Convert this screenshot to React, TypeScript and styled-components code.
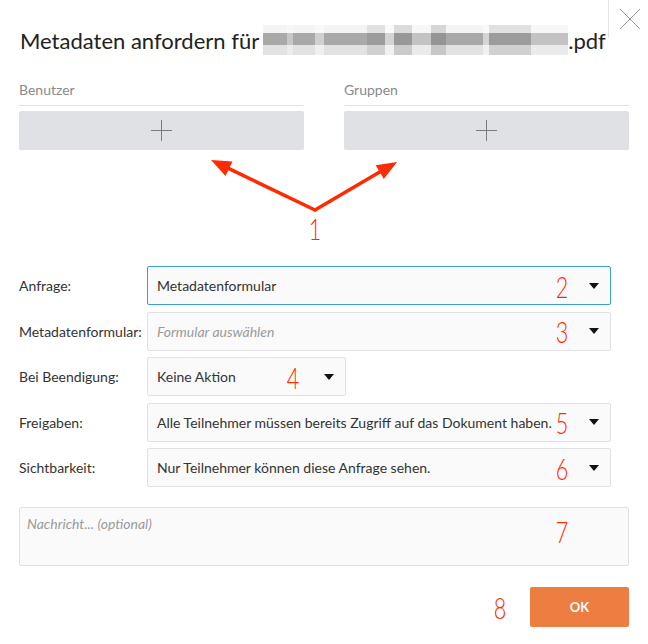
import React from "react";
import styled, { createGlobalStyle } from "styled-components";

const Global = createGlobalStyle`
  html, body { margin: 0; padding: 0; background: #fff; }
  body { font-family: Lato, "Open Sans", sans-serif; color: #333; }
  * { box-sizing: border-box; }
`;

const Dialog = styled.div`
  position: relative;
  width: 648px;
  height: 644px;
  padding: 25px 19px 0 19px;
  background: #fff;
  overflow: hidden;
`;

const CloseBox = styled.div`
  position: absolute;
  top: 0;
  left: 608px;
  width: 40px;
  height: 38px;
  border-left: 1px solid #e3e3e3;
  display: flex;
  align-items: center;
  justify-content: center;
  padding-left: 2px;
`;

const Title = styled.h1`
  margin: 0;
  padding-left: 1px;
  font-size: 22px;
  line-height: 29px;
  font-weight: 400;
  color: #222;
  white-space: nowrap;
  display: flex;
  align-items: center;
`;

const Blurred = styled.span`
  display: inline-block;
  width: 305px;
  height: 30px;
  margin: 0 0 0 4px;
  background:
    linear-gradient(to right,
      rgba(255,255,255,0) 0 8%, rgba(255,255,255,0.35) 8% 10%,
      rgba(255,255,255,0) 10% 17%, rgba(255,255,255,0.45) 17% 20%,
      rgba(255,255,255,0) 20% 34%, rgba(0,0,0,0.08) 34% 40%,
      rgba(255,255,255,0.5) 40% 43%, rgba(0,0,0,0.1) 43% 49%,
      rgba(255,255,255,0.3) 49% 55%, rgba(0,0,0,0.12) 55% 60%,
      rgba(255,255,255,0) 60% 72%, rgba(255,255,255,0.5) 72% 74%,
      rgba(0,0,0,0.08) 74% 88%, rgba(255,255,255,0.3) 88% 100%),
    linear-gradient(to bottom,
      #f4f4f4 0 27%, #a9a9a9 27% 67%, #e2e2e2 67% 100%);
`;

const Columns = styled.div`
  margin-top: 26px;
  display: grid;
  grid-template-columns: 285px 285px;
  column-gap: 40px;
`;

const ColumnLabel = styled.div`
  font-size: 14px;
  line-height: 17px;
  color: #8a8a8a;
  padding: 0 0 7px 0;
  border-bottom: 1px solid #e3e3e3;
`;

const AddBox = styled.div`
  margin-top: 5px;
  height: 39px;
  background: #dfe1e4;
  border-radius: 2px;
  display: flex;
  align-items: center;
  justify-content: center;
`;

const Form = styled.div`
  margin-top: 116px;
  display: grid;
  grid-template-columns: 128px 464px;
  row-gap: 6.5px;
  align-items: center;
`;

const Label = styled.div`
  font-size: 14px;
  color: #333;
`;

const Field = styled.div<{ $focus?: boolean; $w?: number }>`
  position: relative;
  height: 39px;
  width: ${(p) => (p.$w ? `${p.$w}px` : "100%")};
  background: #fafafa;
  border: 1px solid ${(p) => (p.$focus ? "#3a9ed8" : "#e1e1e1")};
  border-radius: 2px;
  display: flex;
  align-items: center;
  padding: 0 30px 0 9px;
  font-size: 14px;
  color: #333;
`;

const Placeholder = styled.span`
  font-style: italic;
  color: #9a9a9a;
`;

const Caret = styled.span`
  position: absolute;
  right: 11px;
  top: 50%;
  margin-top: -3px;
  width: 0;
  height: 0;
  border-left: 5px solid transparent;
  border-right: 5px solid transparent;
  border-top: 6px solid #111;
`;

const Marker = styled.span<{ $right?: number; $top?: number }>`
  position: absolute;
  right: ${(p) => p.$right ?? 42}px;
  top: ${(p) => (p.$top !== undefined ? `${p.$top}px` : "50%")};
  transform: ${(p) => (p.$top !== undefined ? "" : "translateY(-50%)")} scaleX(0.72);
  transform-origin: right center;
  font-family: Lato, sans-serif;
  font-weight: 300;
  font-style: normal;
  font-size: 30px;
  line-height: 30px;
  color: #ff2a00;
`;

const MessageBox = styled.div`
  position: relative;
  margin-top: 20px;
  height: 59px;
  background: #fafafa;
  border: 1px solid #e1e1e1;
  border-radius: 2px;
  padding: 7px 7px;
  font-size: 14px;
  font-style: italic;
  color: #9a9a9a;
`;

const Footer = styled.div`
  position: relative;
  margin-top: 21px;
  display: flex;
  justify-content: flex-end;
`;

const OkButton = styled.button`
  width: 99px;
  height: 40px;
  border: none;
  border-radius: 2px;
  background: #ed7d40;
  color: #fff;
  font-family: Lato, sans-serif;
  font-weight: 700;
  font-size: 13px;
`;

const Arrows = styled.svg`
  position: absolute;
  left: 0;
  top: 0;
  pointer-events: none;
`;

const One = styled.span`
  position: absolute;
  left: 315px;
  top: 213px;
  transform: translateX(-50%) scaleX(0.72);
  font-weight: 300;
  font-size: 30px;
  line-height: 30px;
  color: #ff2a00;
`;

const Plus = () => (
  <svg width="21" height="21" viewBox="0 0 21 21">
    <path d="M10.5 0V21M0 10.5H21" stroke="#7b7b7b" strokeWidth="1" />
  </svg>
);

export default function App() {
  return (
    <>
      <Global />
      <Dialog>
        <CloseBox>
          <svg width="22" height="22" viewBox="0 0 22 22">
            <path d="M1 1L21 21M21 1L1 21" stroke="#9a9a9a" strokeWidth="1" />
          </svg>
        </CloseBox>
        <Title>
          Metadaten anfordern für<Blurred />.pdf
        </Title>
        <Columns>
          <div>
            <ColumnLabel>Benutzer</ColumnLabel>
            <AddBox>
              <Plus />
            </AddBox>
          </div>
          <div>
            <ColumnLabel>Gruppen</ColumnLabel>
            <AddBox>
              <Plus />
            </AddBox>
          </div>
        </Columns>

        <Arrows width="648" height="260">
          <g stroke="#ff2a00" strokeWidth="3.5" strokeLinecap="round" fill="none">
            <path d="M315 210L229 168.7M315 210L379.7 172.1" />
          </g>
          <g fill="#ff2a00">
            <polygon points="211,160 232.5,161.5 225.5,175.9" />
            <polygon points="397,162 383.8,179 375.7,165.2" />
          </g>
        </Arrows>
        <One>1</One>

        <Form>
          <Label>Anfrage:</Label>
          <Field $focus>
            Metadatenformular
            <Marker>2</Marker>
            <Caret />
          </Field>
          <Label>Metadatenformular:</Label>
          <Field>
            <Placeholder>Formular auswählen</Placeholder>
            <Marker>3</Marker>
            <Caret />
          </Field>
          <Label>Bei Beendigung:</Label>
          <Field $w={199}>
            Keine Aktion
            <Marker $right={46}>4</Marker>
            <Caret />
          </Field>
          <Label>Freigaben:</Label>
          <Field>
            Alle Teilnehmer müssen bereits Zugriff auf das Dokument haben.
            <Marker>5</Marker>
            <Caret />
          </Field>
          <Label>Sichtbarkeit:</Label>
          <Field>
            Nur Teilnehmer können diese Anfrage sehen.
            <Marker>6</Marker>
            <Caret />
          </Field>
        </Form>

        <MessageBox>
          Nachricht... (optional)
          <Marker $right={60} $top={8}>7</Marker>
        </MessageBox>

        <Footer>
          <Marker $right={123} $top={5}>8</Marker>
          <OkButton>OK</OkButton>
        </Footer>
      </Dialog>
    </>
  );
}
